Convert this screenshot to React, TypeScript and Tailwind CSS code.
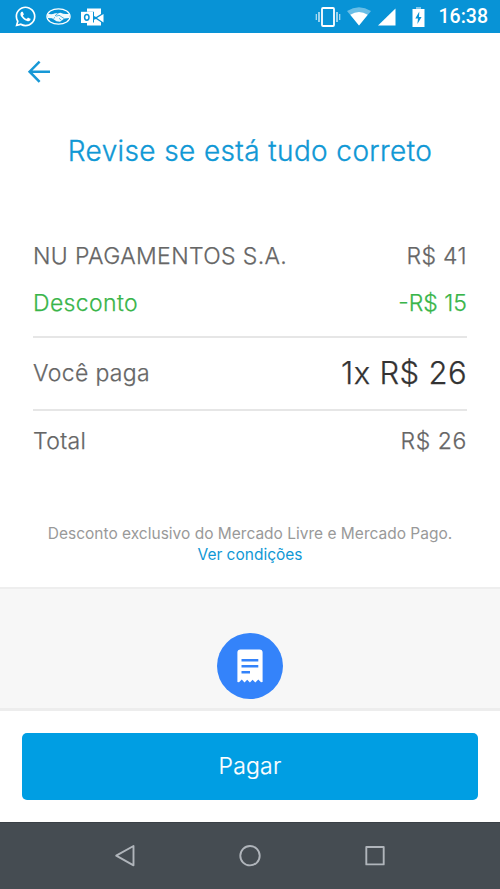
import React from 'react';
import { FaWhatsapp } from 'react-icons/fa';

const StatusBar: React.FC = () => (
  <div className="h-[33px] shrink-0 bg-[#0893d6] flex items-center justify-between pl-[14px] pr-[12px] text-white">
    <div className="flex items-center">
      <FaWhatsapp size={23} />
      {/* Handshake */}
      <svg width="25" height="17" viewBox="0 0 25 17" className="ml-[9px]" fill="none">
        <ellipse cx="12.5" cy="8.5" rx="11.6" ry="7.7" stroke="white" strokeWidth="1.2" />
        <path d="M1.5 5.5 Q5.5 7.2 9 5.2 L12 5.2 L14.5 4.8 Q19 7 23.5 5.5 L23.5 10 L18.5 10.6 L14 13.8 L10.5 13.3 L6 10.2 L1.5 10 Z" fill="white" fillOpacity="0.95" />
        <path d="M12.5 5 L9.2 7.6 Q10.5 8.8 13 7.2 L18.2 10.6 M13 10.3 L15.3 12.2 M7.5 10.6 L9 9.4" stroke="#0893d6" strokeWidth="0.7" />
      </svg>
      {/* Outlook */}
      <svg width="23" height="18" viewBox="0 0 23 18" className="ml-[10px]">
        <path d="M6 0.5 H20 V6 L15 9 L13 8 V3.8 H6 Z" fill="white" />
        <path d="M6 14.5 H13 V11.8 L15 11 L20 14.2 V17.5 H6 Z" fill="white" />
        <path d="M16 10 L22.5 6 V14.4 Z" fill="white" />
        <path d="M0 3.8 H12 V15 H0 Z" fill="white" />
        <ellipse cx="5.8" cy="9.3" rx="2.2" ry="2.9" fill="none" stroke="#0893d6" strokeWidth="1.5" />
      </svg>
    </div>
    <div className="flex items-center">
      {/* Vibrate */}
      <svg width="26" height="22" viewBox="0 0 26 22" fill="none" stroke="white">
        <rect x="7" y="2" width="12" height="18" rx="1" strokeWidth="1.8" />
        <path d="M4 6 V16 M22 6 V16" strokeWidth="1.4" strokeOpacity="0.85" />
        <path d="M1.3 8 V14 M24.7 8 V14" strokeWidth="1.2" strokeOpacity="0.7" />
      </svg>
      {/* Wifi */}
      <svg width="24" height="19" viewBox="0 0 24 19" className="ml-[6px]">
        <path d="M12 18.5 L0 4 Q12 -3.4 24 4 Z" fill="white" fillOpacity="0.4" />
        <path d="M12 18.5 L3.3 7.8 Q12 2 20.7 7.8 Z" fill="white" />
      </svg>
      {/* Signal */}
      <svg width="18" height="18" viewBox="0 0 18 18" className="ml-[7px]">
        <path d="M0 17.5 L17.5 0.5 V17.5 Z" fill="white" />
      </svg>
      {/* Battery */}
      <svg width="13" height="20" viewBox="0 0 13 20" className="ml-[16px]">
        <path d="M4 0 H9 V2 H4 Z" fill="white" fillOpacity="0.5" />
        <path d="M0.5 2 H12.5 V20 H0.5 Z" fill="white" />
        <path d="M7.3 4.5 L3.3 11.5 H6 L5.4 17 L9.6 10 H7 Z" fill="#0893d6" />
      </svg>
      <span className="ml-[14px] pt-px font-['Roboto'] font-medium text-[19.5px] leading-none">16:38</span>
    </div>
  </div>
);

const Row: React.FC<{ label: string; value: string; className: string; valueClass?: string }> = ({ label, value, className, valueClass = '' }) => (
  <div className={`flex items-center justify-between ${className}`}>
    <span>{label}</span>
    <span className={valueClass}>{value}</span>
  </div>
);

const NavBar: React.FC = () => (
  <div className="h-[67px] shrink-0 bg-[#454c52] border-t border-[#3a4046] flex items-center justify-center gap-[101px]">
    <svg width="24" height="24" viewBox="0 0 24 24" fill="none" stroke="#b0b5bb" strokeWidth="1.9" strokeLinejoin="round">
      <path d="M20.5 2 V21.3 L3.2 11.7 Z" />
    </svg>
    <svg width="24" height="24" viewBox="0 0 24 24" fill="none" stroke="#b0b5bb" strokeWidth="1.9">
      <circle cx="12" cy="11.7" r="9.7" />
    </svg>
    <svg width="24" height="24" viewBox="0 0 24 24" fill="none" stroke="#b0b5bb" strokeWidth="1.9" strokeLinejoin="round">
      <rect x="3.3" y="3" width="17.4" height="17.4" />
    </svg>
  </div>
);

export default function App() {
  return (
    <div className="w-full h-[889px] flex flex-col overflow-hidden bg-white font-['Inter',sans-serif] font-light text-[#666]">
      <StatusBar />

      <main className="h-[554px] shrink-0 flex flex-col">
        <button className="mt-[27px] ml-[27px] w-6 h-6" aria-label="Voltar">
          <svg width="24" height="24" viewBox="0 0 24 24" fill="none" stroke="#1798d6" strokeWidth="2.5">
            <path d="M12.6 1.6 L2.6 11.7 L12.6 21.8 M2.5 11.7 H23" />
          </svg>
        </button>

        <h1 className="mt-[47px] h-10 text-center text-[28px] leading-10 tracking-[0.38px] text-[#1098d5] whitespace-nowrap [-webkit-text-stroke:0.35px]">
          Revise se está tudo correto
        </h1>

        <section className="mt-[62px] mx-[33px] text-[23px] leading-[47px] tracking-[0.36px] [-webkit-text-stroke:0.25px]">
          <Row label="NU PAGAMENTOS S.A." value="R$ 41" className="h-[47px]" />
          <Row label="Desconto" value="-R$ 15" className="h-[47px] text-[#39b54a]" valueClass="tracking-normal" />
          <Row
            label="Você paga"
            value="1x R$ 26"
            className="mt-[9px] h-[75px] border-y-2 border-[#e6e6e6]"
            valueClass="text-[31px] text-[#333] pb-[2px]"
          />
          <Row label="Total" value="R$ 26" className="h-[60px]" valueClass="tracking-[0.6px]" />
        </section>

        <p className="mt-[52px] text-center text-[15.5px] leading-[21px] font-normal text-[#999] whitespace-nowrap">
          Desconto exclusivo do Mercado Livre e Mercado Pago.
          <a href="#" className="block text-[#1098d5]">Ver condições</a>
        </p>
      </main>

      <div className="h-[124px] shrink-0 bg-[#f7f7f7] border-t-2 border-[#eeeeee] border-b-[3px] border-b-[#ededed] flex justify-center items-start pt-[44px]">
        <div className="w-[66px] h-[66px] rounded-full bg-[#3483fa] flex items-center justify-center">
          <svg width="26" height="34" viewBox="0 0 26 34">
            <path d="M0.4 3.5 Q0.4 0.4 3.5 0.4 H22.5 Q25.6 0.4 25.6 3.5 V33 L24 33.3 L21.3 30.5 L18.3 33.5 L15.6 30.8 L12.9 33.5 L10.2 30.8 L7.5 33.5 L4.8 30.5 L2 33.3 L0.4 33 Z" fill="white" />
            <path d="M4.5 11.3 H21.3 M4.5 17.3 H21.3 M4.5 23.2 H13" stroke="#3483fa" strokeWidth="2.6" />
          </svg>
        </div>
      </div>

      <div className="h-[111px] shrink-0 bg-white px-[22px] pt-[22px]">
        <button className="w-full h-[67px] rounded-[5px] bg-[#009ee3] text-white text-[23px] tracking-[0.2px] [-webkit-text-stroke:0.2px]">Pagar</button>
      </div>

      <NavBar />
    </div>
  );
}
